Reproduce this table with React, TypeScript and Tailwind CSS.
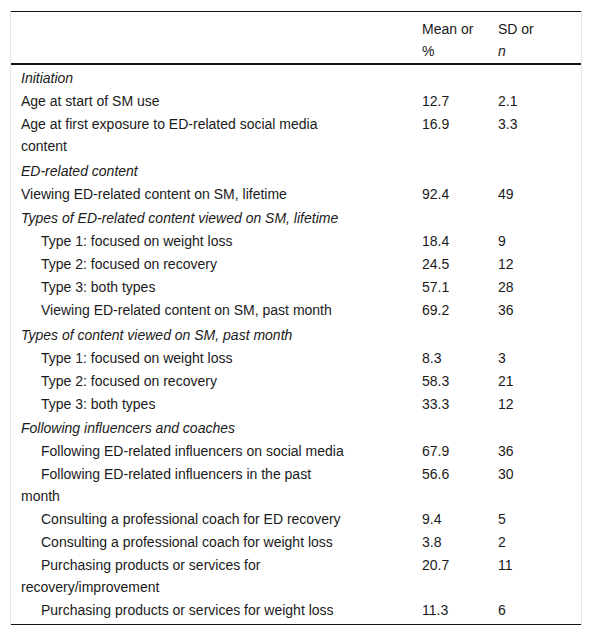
import { Fragment } from 'react';

type Row = {
  label: string;
  mean?: string;
  sd?: string;
  heading?: boolean;
  indent?: boolean;
};

const rows: Row[] = [
  { label: 'Initiation', heading: true },
  { label: 'Age at start of SM use', mean: '12.7', sd: '2.1' },
  { label: 'Age at first exposure to ED-related social media content', mean: '16.9', sd: '3.3' },
  { label: 'ED-related content', heading: true },
  { label: 'Viewing ED-related content on SM, lifetime', mean: '92.4', sd: '49' },
  { label: 'Types of ED-related content viewed on SM, lifetime', heading: true },
  { label: 'Type 1: focused on weight loss', mean: '18.4', sd: '9', indent: true },
  { label: 'Type 2: focused on recovery', mean: '24.5', sd: '12', indent: true },
  { label: 'Type 3: both types', mean: '57.1', sd: '28', indent: true },
  { label: 'Viewing ED-related content on SM, past month', mean: '69.2', sd: '36', indent: true },
  { label: 'Types of content viewed on SM, past month', heading: true },
  { label: 'Type 1: focused on weight loss', mean: '8.3', sd: '3', indent: true },
  { label: 'Type 2: focused on recovery', mean: '58.3', sd: '21', indent: true },
  { label: 'Type 3: both types', mean: '33.3', sd: '12', indent: true },
  { label: 'Following influencers and coaches', heading: true },
  { label: 'Following ED-related influencers on social media', mean: '67.9', sd: '36', indent: true },
  { label: 'Following ED-related influencers in the past month', mean: '56.6', sd: '30', indent: true },
  { label: 'Consulting a professional coach for ED recovery', mean: '9.4', sd: '5', indent: true },
  { label: 'Consulting a professional coach for weight loss', mean: '3.8', sd: '2', indent: true },
  { label: 'Purchasing products or services for recovery/improvement', mean: '20.7', sd: '11', indent: true },
  { label: 'Purchasing products or services for weight loss', mean: '11.3', sd: '6', indent: true },
];

export default function App() {
  return (
    <div className="w-[592px] h-[637px] bg-white pt-[11px] px-[10px] font-['Liberation_Sans',Arial,sans-serif] text-[14px] leading-[22px] text-[#1a1a1a]">
      <div className="border-x border-[#e4e4e4]">
        <div className="grid grid-cols-[411px_76px_1fr] border-t border-t-[#111] border-b-2 border-b-[#111]">
          <div />
          <div className="pt-[6px] pb-[1px]">Mean or<br />%</div>
          <div className="pt-[6px] pb-[1px]">SD or<br /><i>n</i></div>
        </div>
        <div className="grid grid-cols-[411px_76px_1fr] pb-[2px] border-b border-b-[#111]">
          {rows.map((r, i) => (
            <Fragment key={i}>
              <div className={`pl-[10px] pr-[72px] py-[0.5px] ${r.heading ? 'italic pt-[2px]' : ''} ${r.indent ? 'indent-[20px]' : ''}`}>
                {r.label}
              </div>
              <div className={`py-[0.5px] ${r.heading ? 'pt-[2px]' : ''}`}>{r.mean}</div>
              <div className={`py-[0.5px] ${r.heading ? 'pt-[2px]' : ''}`}>{r.sd}</div>
            </Fragment>
          ))}
        </div>
      </div>
    </div>
  );
}
